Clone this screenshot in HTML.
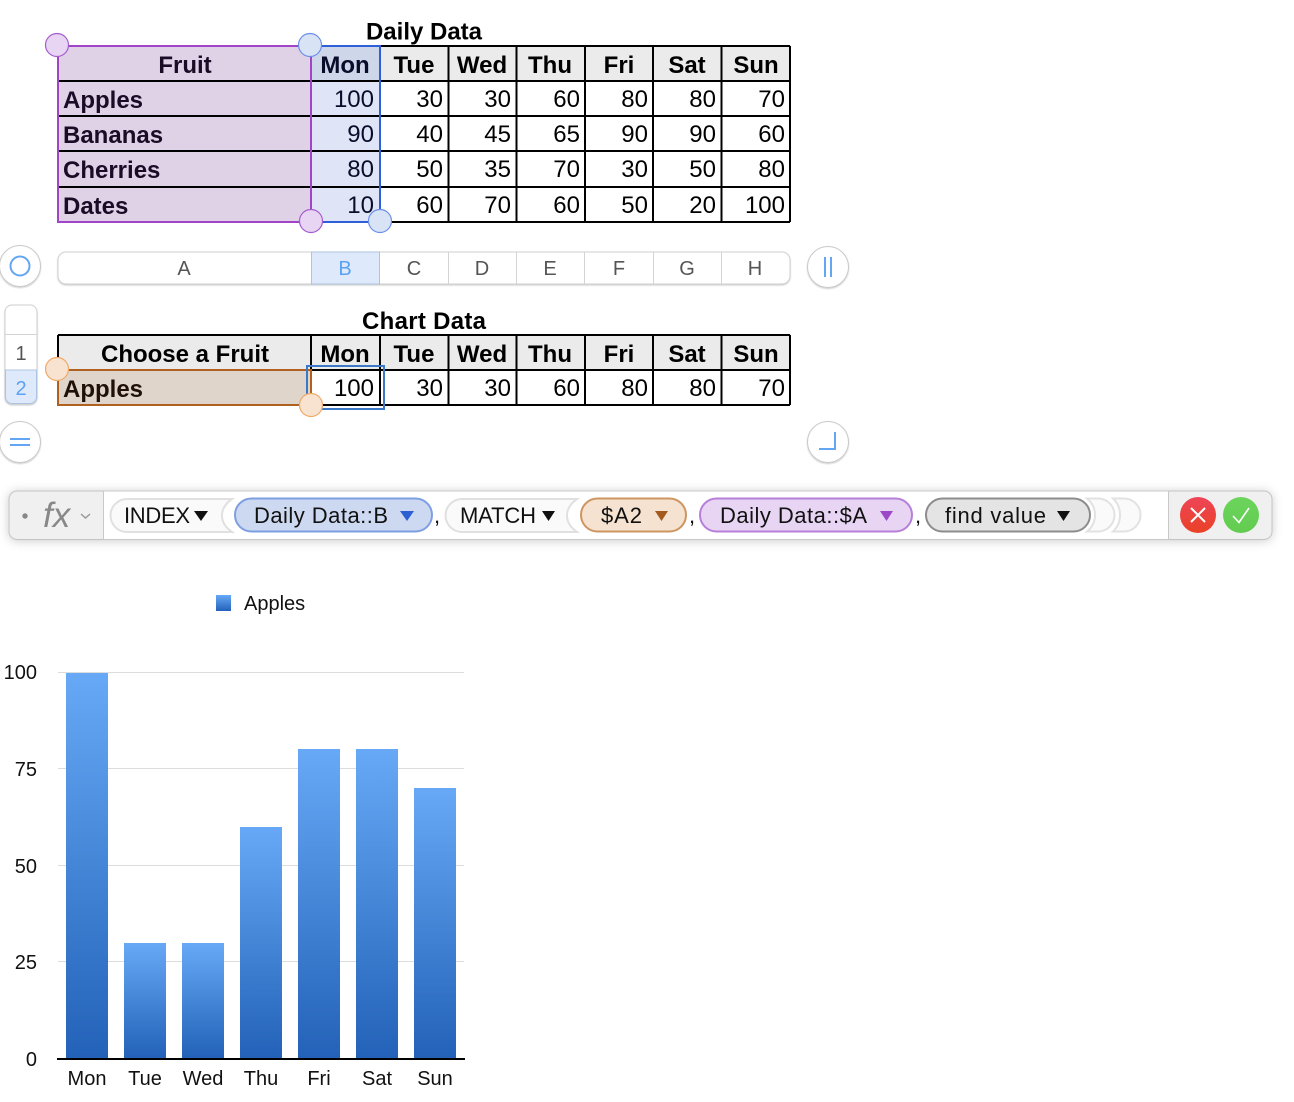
<!DOCTYPE html>
<html><head><meta charset="utf-8"><title>Sheet</title>
<style>
html,body{margin:0;padding:0;background:#fff;width:1294px;height:1102px;overflow:hidden}
svg{display:block;position:absolute;left:0;top:0}
text{font-family:"Liberation Sans",sans-serif}
.h{font-weight:700;font-size:24px;text-anchor:middle;fill:#000}
.b{font-weight:700;font-size:24px;fill:#1a0c26}
.n{font-size:24px;text-anchor:end;fill:#000}
.c{font-size:20px;text-anchor:middle;fill:#555}
.t{font-size:22px;fill:#111}
.a{font-size:20px;fill:#111}
.am{font-size:20px;fill:#111;text-anchor:middle}
.ae{font-size:20px;fill:#111;text-anchor:end}
</style></head><body>
<svg width="1294" height="1102" viewBox="0 0 1294 1102" xmlns="http://www.w3.org/2000/svg">
<defs>
<linearGradient id="bar" x1="0" y1="0" x2="0" y2="1"><stop offset="0" stop-color="#67a9f6"/><stop offset="1" stop-color="#2362b8"/></linearGradient>
<linearGradient id="red" x1="0" y1="0" x2="0" y2="1"><stop offset="0" stop-color="#ee4458"/><stop offset="1" stop-color="#ea4226"/></linearGradient>
<linearGradient id="grn" x1="0" y1="0" x2="0" y2="1"><stop offset="0" stop-color="#6cd45c"/><stop offset="1" stop-color="#62cc50"/></linearGradient>
<filter id="sh" x="-20%" y="-20%" width="140%" height="150%"><feDropShadow dx="0" dy="1" stdDeviation="0.7" flood-color="#000" flood-opacity=".2"/></filter>
<filter id="bsh" x="-3%" y="-40%" width="106%" height="190%"><feDropShadow dx="0" dy="1" stdDeviation="5" flood-color="#000" flood-opacity=".2"/></filter>
</defs>

<!-- Daily Data table -->
<text class="h" x="424" y="39.500">Daily Data</text>
<rect x="58" y="46" width="732" height="35" fill="#ebebeb"/>
<rect x="58" y="46" width="253" height="176" fill="#e0d2e6"/>
<rect x="311" y="46" width="69" height="176" fill="#dfe5f7"/>
<rect x="311" y="46" width="69" height="35" fill="#ced6ea"/>
<g stroke="#000" stroke-width="2" fill="none">
<path d="M58 81H790M58 116H790M58 151H790M58 187H790M58 222H790M58 46H790M790 46V222M721.500 46V222M653 46V222M585 46V222M516.500 46V222M448.500 46V222M380 46V222M311 46V222M58 46V222"/>
</g>
<rect x="311" y="46" width="69" height="176" fill="none" stroke="#2d60d8" stroke-width="2"/>
<rect x="58" y="46" width="253" height="176" fill="none" stroke="#a144c8" stroke-width="2"/>

<text class="h" x="185" y="73" style="fill:#1a0c26">Fruit</text>
<text class="h" x="345" y="73" style="fill:#0a0d2a">Mon</text><text class="h" x="414" y="73">Tue</text><text class="h" x="482" y="73">Wed</text><text class="h" x="550" y="73">Thu</text><text class="h" x="619" y="73">Fri</text><text class="h" x="687" y="73">Sat</text><text class="h" x="756" y="73">Sun</text>
<text class="b" x="63" y="108">Apples</text><text class="b" x="63" y="143">Bananas</text><text class="b" x="63" y="178">Cherries</text><text class="b" x="63" y="214">Dates</text>
<g>
<text class="n" x="374" y="107" style="fill:#0a0d2a">100</text><text class="n" x="443" y="107">30</text><text class="n" x="511" y="107">30</text><text class="n" x="580" y="107">60</text><text class="n" x="648" y="107">80</text><text class="n" x="716" y="107">80</text><text class="n" x="785" y="107">70</text>
<text class="n" x="374" y="142" style="fill:#0a0d2a">90</text><text class="n" x="443" y="142">40</text><text class="n" x="511" y="142">45</text><text class="n" x="580" y="142">65</text><text class="n" x="648" y="142">90</text><text class="n" x="716" y="142">90</text><text class="n" x="785" y="142">60</text>
<text class="n" x="374" y="177" style="fill:#0a0d2a">80</text><text class="n" x="443" y="177">50</text><text class="n" x="511" y="177">35</text><text class="n" x="580" y="177">70</text><text class="n" x="648" y="177">30</text><text class="n" x="716" y="177">50</text><text class="n" x="785" y="177">80</text>
<text class="n" x="374" y="213" style="fill:#0a0d2a">10</text><text class="n" x="443" y="213">60</text><text class="n" x="511" y="213">70</text><text class="n" x="580" y="213">60</text><text class="n" x="648" y="213">50</text><text class="n" x="716" y="213">20</text><text class="n" x="785" y="213">100</text>
</g>
<circle cx="57" cy="45" r="11.500" fill="#e8d5f4" stroke="#a55bcf" stroke-width="1.200"/>
<circle cx="310" cy="45" r="11.500" fill="#d9e3f6" stroke="#6b8fe8" stroke-width="1.200"/>
<circle cx="311" cy="221" r="11.500" fill="#e8d5f4" stroke="#a55bcf" stroke-width="1.200"/>
<circle cx="380" cy="221" r="11.500" fill="#d9e3f6" stroke="#6b8fe8" stroke-width="1.200"/>

<!-- Column strip -->
<rect x="58" y="252" width="732" height="32" rx="8" fill="#fff" stroke="#cfcfcf" filter="url(#sh)"/>
<rect x="311.500" y="252" width="68" height="32" fill="#deeafb" stroke="#adc4e0"/>
<path d="M448.500 252V284M516.500 252V284M584.500 252V284M653.500 252V284M721.500 252V284" stroke="#d4d4d4" fill="none"/>
<text class="c" x="184" y="275">A</text><text class="c" x="345" y="275" style="fill:#5aa2f2">B</text><text class="c" x="414" y="275">C</text><text class="c" x="482" y="275">D</text><text class="c" x="550" y="275">E</text><text class="c" x="619" y="275">F</text><text class="c" x="687" y="275">G</text><text class="c" x="755" y="275">H</text>

<!-- Round controls -->
<g fill="#fff" stroke="#c9c9c9" stroke-width="1" filter="url(#sh)">
<circle cx="20" cy="266" r="20.500"/><circle cx="828" cy="267" r="20.500"/><circle cx="20" cy="442" r="20.500"/><circle cx="828" cy="442" r="20.500"/>
</g>
<circle cx="20" cy="266" r="9.500" fill="none" stroke="#62a6f4" stroke-width="2"/>
<path d="M825 257V277M831 257V277" stroke="#62a6f4" stroke-width="2" fill="none"/>
<path d="M10 439H30M10 445H30" stroke="#62a6f4" stroke-width="2" fill="none"/>
<path d="M819 449H835V432" stroke="#62a6f4" stroke-width="2" fill="none"/>

<!-- Row strip -->
<rect x="5" y="305" width="32" height="99" rx="7" fill="#fff" stroke="#cfcfcf" filter="url(#sh)"/>
<path d="M5.500 370H36.500V397a6.500 6.500 0 0 1 -6.500 6.500H12a6.500 6.500 0 0 1 -6.500 -6.500Z" fill="#deeafb" stroke="#adc4e0"/>
<path d="M5 334.500H37" stroke="#d4d4d4"/>
<text class="c" x="21" y="360">1</text><text class="c" x="21" y="395" style="fill:#5aa2f2">2</text>

<!-- Chart Data table -->
<text class="h" x="424" y="329" textLength="124" lengthAdjust="spacing">Chart Data</text>
<rect x="58" y="335" width="732" height="35" fill="#ebebeb"/>
<rect x="58" y="370" width="253" height="35" fill="#e0d5cb"/>
<path d="M58 335H790M58 370H790M58 405H790M790 335V405M721.500 335V405M653 335V405M585 335V405M516.500 335V405M448.500 335V405M380 335V405M311 335V405M58 335V370" stroke="#000" stroke-width="2" fill="none"/>
<rect x="58" y="370" width="253" height="35" fill="none" stroke="#b0601f" stroke-width="2"/>
<rect x="307" y="366" width="77" height="43" fill="none" stroke="#3c78c8" stroke-width="2"/>
<text class="h" x="185" y="362">Choose a Fruit</text>
<text class="h" x="345" y="362">Mon</text><text class="h" x="414" y="362">Tue</text><text class="h" x="482" y="362">Wed</text><text class="h" x="550" y="362">Thu</text><text class="h" x="619" y="362">Fri</text><text class="h" x="687" y="362">Sat</text><text class="h" x="756" y="362">Sun</text>
<text class="b" x="63" y="397" style="fill:#1f1008">Apples</text>
<text class="n" x="374" y="396">100</text><text class="n" x="443" y="396">30</text><text class="n" x="511" y="396">30</text><text class="n" x="580" y="396">60</text><text class="n" x="648" y="396">80</text><text class="n" x="716" y="396">80</text><text class="n" x="785" y="396">70</text>
<circle cx="57" cy="369" r="11.500" fill="#f8e3d0" stroke="#f0a866" stroke-width="1.200"/>
<circle cx="311" cy="405" r="11.500" fill="#f8e3d0" stroke="#f0a866" stroke-width="1.200"/>

<!-- Formula bar -->
<rect x="9" y="491" width="1263" height="48.500" rx="8" fill="#f0f0f0" stroke="#c4c4c4" filter="url(#bsh)"/>
<rect x="103.500" y="491" width="1065" height="48.500" fill="#fff" stroke="#c8c8c8"/>
<circle cx="25" cy="516" r="2.700" fill="#888"/>
<text x="43" y="527" style="font-size:35px;font-style:italic;fill:#888">fx</text>
<path d="M81 514l4.500 4 4.500 -4" fill="none" stroke="#999" stroke-width="1.500"/>

<!-- INDEX pill -->
<path d="M127 499H232Q222 506 222 515.500T232 532H127A16.500 16.500 0 0 1 127 499Z" fill="#fafafa" stroke="#e0e0e0" stroke-width="2"/>
<text class="t" x="124" y="523" textLength="66" lengthAdjust="spacing">INDEX</text>
<path d="M194 511H208L201 521Z" fill="#111"/>
<rect x="235" y="498.500" width="197" height="33" rx="16.500" fill="#cdd9f1" stroke="#7d9fe2" stroke-width="2"/>
<text class="t" x="254" y="523" textLength="134" lengthAdjust="spacing">Daily Data::B</text>
<path d="M400 511H414L407 521Z" fill="#2c5fd2"/>
<text class="t" x="434" y="523">,</text>

<!-- MATCH pill -->
<path d="M462 499H577Q567 506 567 515.500T577 532H462A16.500 16.500 0 0 1 462 499Z" fill="#fafafa" stroke="#e0e0e0" stroke-width="2"/>
<text class="t" x="460" y="523" textLength="76" lengthAdjust="spacing">MATCH</text>
<path d="M542 511H555L548.500 521Z" fill="#111"/>
<rect x="581" y="498.500" width="105" height="33" rx="16.500" fill="#f5e2d0" stroke="#cd9560" stroke-width="2"/>
<text class="t" x="601" y="523" textLength="41" lengthAdjust="spacing">$A2</text>
<path d="M655 511H668L661.500 521Z" fill="#a35a1e"/>
<text class="t" x="689" y="523">,</text>
<rect x="700" y="498.500" width="212" height="33" rx="16.500" fill="#e8d5f4" stroke="#b67fd8" stroke-width="2"/>
<text class="t" x="720" y="523" textLength="147" lengthAdjust="spacing">Daily Data::$A</text>
<path d="M880 511H893L886.500 521Z" fill="#9a48c8"/>
<text class="t" x="915" y="523">,</text>

<!-- closing parens: crescents -->
<path d="M1113 498.500H1124A16.500 16.500 0 0 1 1124 531.500H1113Q1120 525 1120 515Q1120 505 1113 498.500Z" fill="#fafafa" stroke="#e2e2e2" stroke-width="2"/>
<path d="M1087 498.500H1098A16.500 16.500 0 0 1 1098 531.500H1087Q1095 525 1095 515Q1095 505 1087 498.500Z" fill="#fafafa" stroke="#e2e2e2" stroke-width="2"/>
<rect x="926" y="498.500" width="164" height="33" rx="16.500" fill="#e4e4e4" stroke="#8c8c8c" stroke-width="2"/>
<text class="t" x="945" y="523" textLength="101" lengthAdjust="spacing">find value</text>
<path d="M1057 511H1070L1063.500 521Z" fill="#111"/>

<circle cx="1198" cy="515" r="18" fill="url(#red)"/>
<path d="M1191 508L1205 522M1205 508L1191 522" stroke="#fff" stroke-width="2" fill="none"/>
<circle cx="1241" cy="515" r="18" fill="url(#grn)"/>
<path d="M1233 516L1239 522.500L1249 508" stroke="#fff" stroke-width="1.600" fill="none"/>

<!-- Chart -->
<rect x="216" y="595" width="15" height="16" fill="url(#bar)"/>
<text class="a" x="244" y="610">Apples</text>
<path d="M58 672.500H464M58 768.500H464M58 865.500H464M58 961.500H464" stroke="#dcdcdc" fill="none"/>
<text class="ae" x="37" y="679">100</text><text class="ae" x="37" y="776">75</text><text class="ae" x="37" y="873">50</text><text class="ae" x="37" y="969">25</text><text class="ae" x="37" y="1066">0</text>
<rect x="66" y="673" width="42" height="385" fill="url(#bar)"/>
<rect x="124" y="943" width="42" height="115" fill="url(#bar)"/>
<rect x="182" y="943" width="42" height="115" fill="url(#bar)"/>
<rect x="240" y="827" width="42" height="231" fill="url(#bar)"/>
<rect x="298" y="749" width="42" height="309" fill="url(#bar)"/>
<rect x="356" y="749" width="42" height="309" fill="url(#bar)"/>
<rect x="414" y="788" width="42" height="270" fill="url(#bar)"/>
<rect x="57" y="1058" width="408" height="2" fill="#000"/>
<text class="am" x="87" y="1085">Mon</text><text class="am" x="145" y="1085">Tue</text><text class="am" x="203" y="1085">Wed</text><text class="am" x="261" y="1085">Thu</text><text class="am" x="319" y="1085">Fri</text><text class="am" x="377" y="1085">Sat</text><text class="am" x="435" y="1085">Sun</text>
</svg>
</body></html>
